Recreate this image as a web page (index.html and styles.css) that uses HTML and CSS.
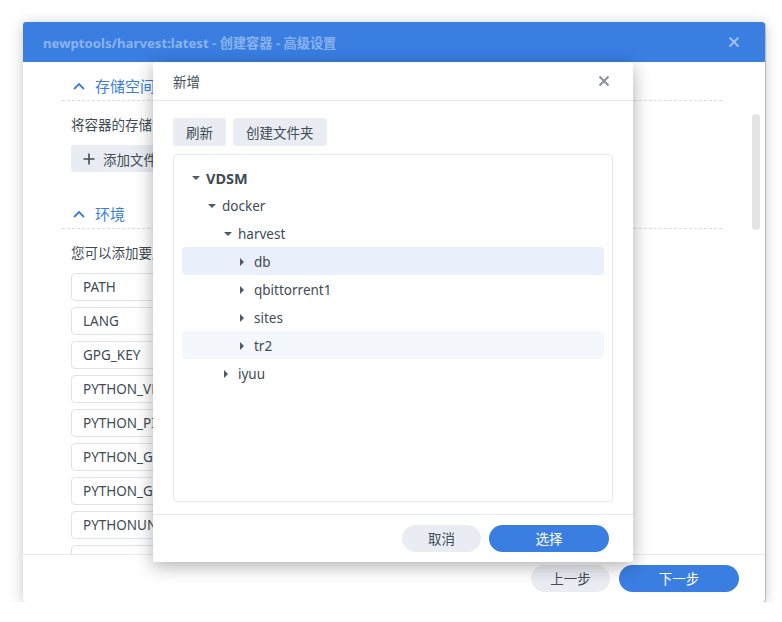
FILE: index.html
```html
<!DOCTYPE html>
<html lang="zh">
<head>
  <meta charset="UTF-8" />
  <title>创建容器 - 高级设置</title>
  <link rel="stylesheet" href="styles.css">
</head>
<body>

  <div class="window">
    <div class="window-head">
      <span class="window-title">newptools/harvest:latest - 创建容器 - 高级设置</span>
      <svg class="window-close" viewBox="0 0 12 12" width="12" height="12"><path d="M1.5 1.5 L10.5 10.5 M10.5 1.5 L1.5 10.5" stroke="rgba(255,255,255,0.5)" stroke-width="2"/></svg>
    </div>

    <div class="window-body">
      <div class="scroll-area">
        <div class="section-head">
          <svg class="chevron" viewBox="0 0 12 8" width="12" height="8"><path d="M1 7 L6 2 L11 7" fill="none" stroke="#3a7ee2" stroke-width="1.8"/></svg>
          <span>存储空间</span>
        </div>
        <div class="section-body">
          <p class="desc">将容器的存储空间映射到文件夹或文件</p>
          <button class="btn-grey btn-add">
            <svg class="plus" viewBox="0 0 12 12" width="12" height="12"><path d="M6 0.5 V11.5 M0.5 6 H11.5" stroke="#414b55" stroke-width="1.6"/></svg>
            添加文件夹
          </button>
        </div>

        <div class="section-head">
          <svg class="chevron" viewBox="0 0 12 8" width="12" height="8"><path d="M1 7 L6 2 L11 7" fill="none" stroke="#3a7ee2" stroke-width="1.8"/></svg>
          <span>环境</span>
        </div>
        <div class="section-body">
          <p class="desc">您可以添加要应用的环境变量</p>
          <div class="env-list">
            <div class="env-input">PATH</div>
            <div class="env-input">LANG</div>
            <div class="env-input">GPG_KEY</div>
            <div class="env-input">PYTHON_VERSION</div>
            <div class="env-input">PYTHON_PIP_VERSION</div>
            <div class="env-input">PYTHON_GET_PIP_URL</div>
            <div class="env-input">PYTHON_GET_PIP_SHA256</div>
            <div class="env-input">PYTHONUNBUFFERED</div>
            <div class="env-input"></div>
          </div>
        </div>
      </div>
      <div class="scrollbar"></div>
    </div>

    <div class="window-foot">
      <button class="btn-pill btn-grey-pill">上一步</button>
      <button class="btn-pill btn-blue-pill wide">下一步</button>
    </div>

    <!-- folder picker dialog -->
    <div class="dialog">
      <div class="dialog-head">
        <span>新增</span>
        <svg class="dialog-close" viewBox="0 0 12 12" width="12" height="12"><path d="M1.5 1.5 L10.5 10.5 M10.5 1.5 L1.5 10.5" stroke="#8a9099" stroke-width="2"/></svg>
      </div>
      <div class="dialog-body">
        <div class="toolbar">
          <button class="btn-grey">刷新</button>
          <button class="btn-grey">创建文件夹</button>
        </div>
        <div class="tree">
          <div class="row lv0 root"><span class="caret down"></span>VDSM</div>
          <div class="row lv1"><span class="caret down"></span>docker</div>
          <div class="row lv2"><span class="caret down"></span>harvest</div>
          <div class="row lv3 selected"><span class="caret right"></span>db</div>
          <div class="row lv3"><span class="caret right"></span>qbittorrent1</div>
          <div class="row lv3"><span class="caret right"></span>sites</div>
          <div class="row lv3 hover"><span class="caret right"></span>tr2</div>
          <div class="row lv2"><span class="caret right"></span>iyuu</div>
        </div>
      </div>
      <div class="dialog-foot">
        <button class="btn-pill btn-grey-pill">取消</button>
        <button class="btn-pill btn-blue-pill wide">选择</button>
      </div>
    </div>
  </div>

</body>
</html>
```

FILE: styles.css
```css
* {
  box-sizing: border-box;
  margin: 0;
  padding: 0;
}

body {
  background-color: white;
  color: #414b55;
  font-family: 'Noto Sans', 'Noto Sans CJK SC', sans-serif;
  font-size: 13.5px;
  overflow: hidden;
}

button {
  font-family: inherit;
  font-size: 13.5px;
  color: #414b55;
  border: none;
  cursor: pointer;
}

.window {
  position: relative;
  width: 742px;
  height: 580px;
  margin: 22px 0 0 23px;
  background: white;
  border-radius: 3px;
  box-shadow: 0 2px 14px rgba(0, 0, 0, 0.22), 1px 1px 1px rgba(0, 0, 0, 0.2);
  display: flex;
  flex-direction: column;
  overflow: hidden;
}

.window-head {
  height: 40px;
  flex: none;
  background-color: #3a7ee2;
  display: flex;
  align-items: center;
  justify-content: space-between;
  padding: 0 25px 0 20px;
}

.window-title {
  color: rgba(255, 255, 255, 0.42);
  font-weight: bold;
  font-size: 13.2px;
}

.window-body {
  flex: 1;
  position: relative;
  overflow: hidden;
}

.scroll-area {
  padding: 9px 43px 0 39px;
}

.scrollbar {
  position: absolute;
  right: 5px;
  top: 52px;
  width: 8px;
  height: 116px;
  border-radius: 4px;
  background: #e4e4e4;
}

.section-head {
  height: 30px;
  display: flex;
  align-items: center;
  padding-left: 11px;
  border-bottom: 1px dashed #d8dce1;
  color: #3a7ee2;
  font-size: 15px;
}

.chevron {
  margin-right: 10px;
}

.section-body {
  padding: 0 9px;
}

.desc {
  line-height: 18px;
  margin-top: 15px;
}

.btn-grey {
  background: #e9edf3;
  border-radius: 3px;
  height: 28px;
  padding: 0 13px;
}

.btn-add {
  margin: 11px 0 27px 0;
  height: 27px;
  display: flex;
  align-items: center;
  padding-left: 12px;
}

.plus {
  margin-right: 8px;
}

.env-list {
  margin-top: 11px;
  display: flex;
  flex-direction: column;
  gap: 6px;
}

.env-input {
  width: 220px;
  height: 28px;
  border: 1px solid #dfe3e8;
  border-radius: 4px;
  line-height: 26px;
  padding-left: 11px;
}

.window-foot {
  height: 48px;
  flex: none;
  border-top: 1px solid #e6e9ed;
  display: flex;
  justify-content: flex-end;
  align-items: center;
  gap: 9px;
  padding: 0 26px 1px 0;
}

.btn-pill {
  height: 27px;
  border-radius: 14px;
  width: 79px;
}

.btn-pill.wide {
  width: 120px;
}

.btn-grey-pill {
  background: #e9edf3;
}

.btn-blue-pill {
  background: #3a7ee2;
  color: white;
}

/* dialog */
.dialog {
  position: absolute;
  left: 130px;
  top: 40px;
  width: 480px;
  height: 500px;
  background: white;
  border-radius: 2px;
  box-shadow: 0 4px 18px rgba(0, 0, 0, 0.32);
  display: flex;
  flex-direction: column;
}

.dialog-head {
  height: 39px;
  flex: none;
  display: flex;
  align-items: center;
  justify-content: space-between;
  padding: 0 23px 0 20px;
  border-bottom: 1px solid #e6e9ed;
}

.dialog-body {
  flex: 1;
  padding: 17px 20px 12px 20px;
  display: flex;
  flex-direction: column;
}

.toolbar {
  display: flex;
  gap: 7px;
}

.tree {
  flex: 1;
  margin-top: 8px;
  border: 1px solid #e4e8ee;
  border-radius: 4px;
  padding: 8px 8px;
}

.row {
  height: 28px;
  display: flex;
  align-items: center;
  border-radius: 4px;
  padding-top: 1px;
}

.row.root {
  font-weight: bold;
  font-size: 14.5px;
}

.row.selected {
  background: #e9f0fb;
}

.row.hover {
  background: #f4f7fb;
}

.lv0 { padding-left: 9px; }
.lv1 { padding-left: 25px; }
.lv2 { padding-left: 41px; }
.lv3 { padding-left: 57px; }

.caret {
  width: 10px;
  height: 10px;
  margin-right: 5px;
  position: relative;
}

.caret.down::after {
  content: '';
  position: absolute;
  left: 1px;
  top: 3px;
  border-left: 4px solid transparent;
  border-right: 4px solid transparent;
  border-top: 4px solid #4f5863;
}

.caret.right::after {
  content: '';
  position: absolute;
  left: 1px;
  top: 1px;
  border-top: 4px solid transparent;
  border-bottom: 4px solid transparent;
  border-left: 4px solid #4f5863;
}

.dialog-foot {
  height: 48px;
  flex: none;
  border-top: 1px solid #e6e9ed;
  display: flex;
  justify-content: flex-end;
  align-items: center;
  gap: 8px;
  padding: 0 24px 1px 0;
}
```
